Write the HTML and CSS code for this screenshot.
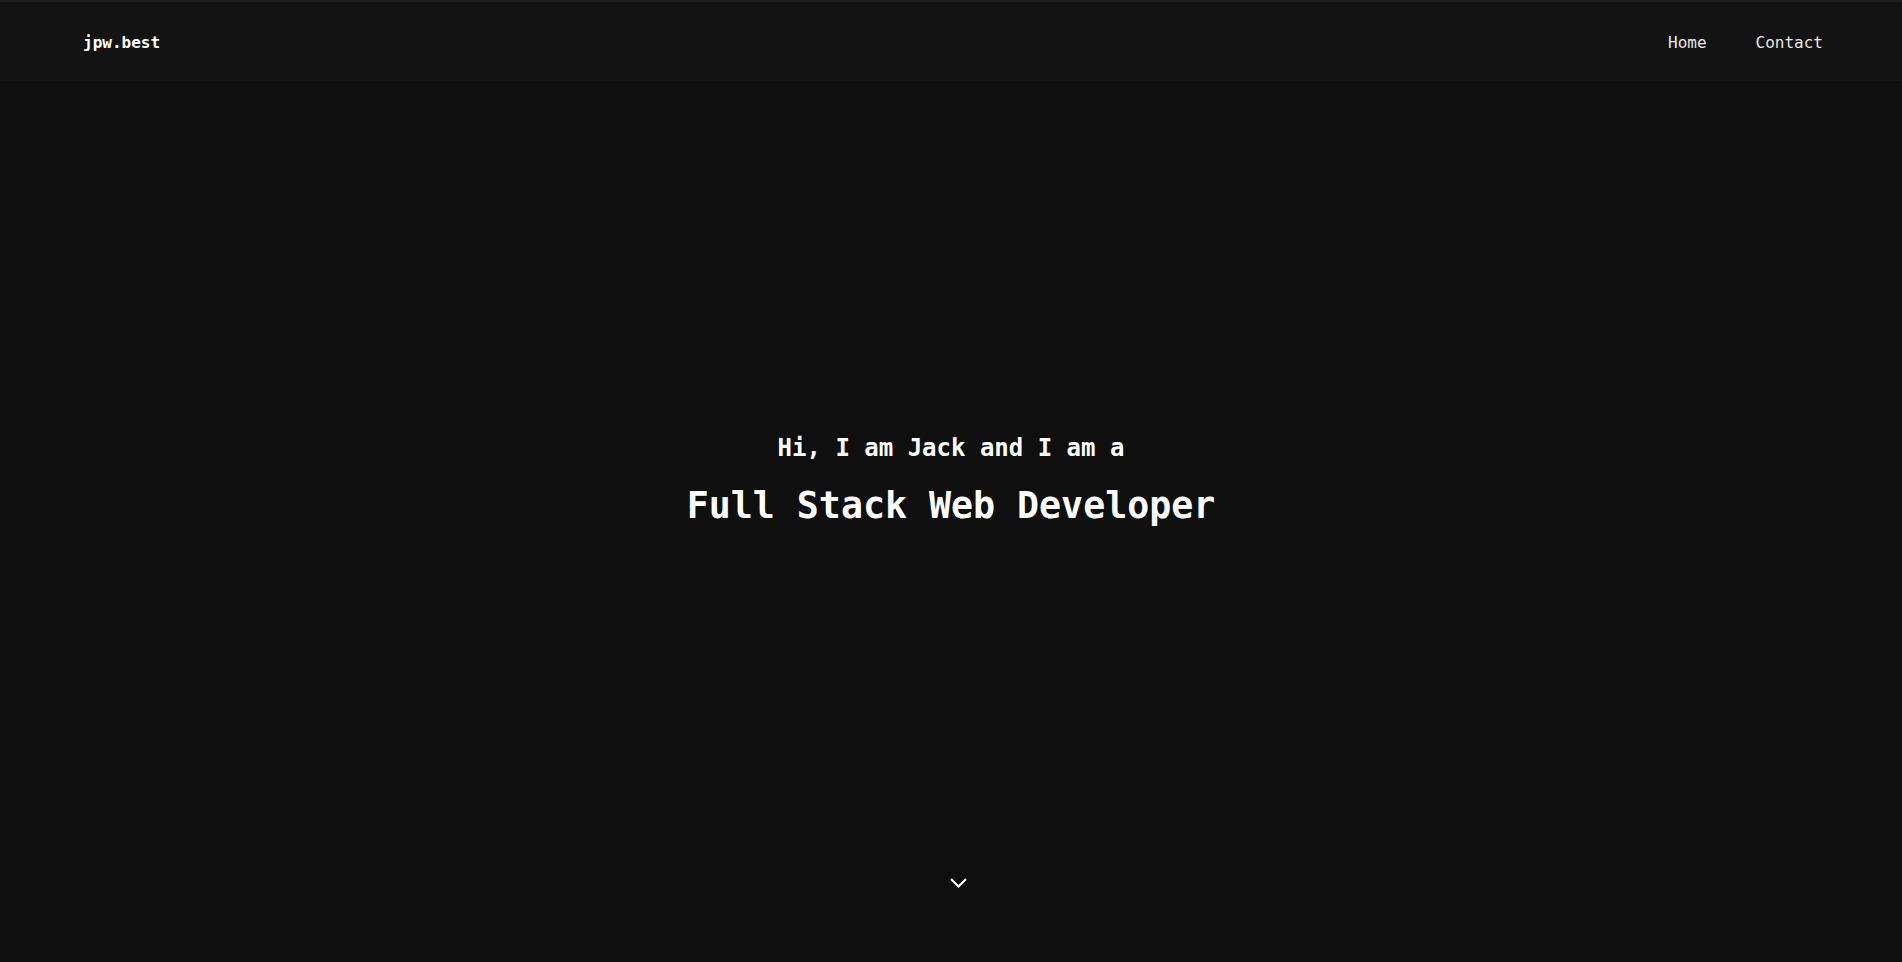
FILE: index.html
```html
<!DOCTYPE html>
<html lang="en">
<head>
<meta charset="utf-8">
<title>jpw.best</title>
<link rel="stylesheet" href="styles.css">
</head>
<body>
<header class="site-header">
  <a class="logo" href="#">jpw.best</a>
  <nav class="nav">
    <a href="#">Home</a>
    <a href="#">Contact</a>
  </nav>
</header>
<main class="hero">
  <div class="spacer"></div>
  <div class="intro">
    <p class="greeting">Hi, I am Jack and I am a</p>
    <h1 class="title">Full Stack Web Developer</h1>
  </div>
  <div class="scroll">
    <svg class="chevron" width="17" height="10" viewBox="0 0 17 10" aria-hidden="true">
      <polyline points="1,1 8.5,8.5 16,1" fill="none" stroke="#ffffff" stroke-width="2"/>
    </svg>
  </div>
</main>
</body>
</html>
```

FILE: styles.css
```css
* { box-sizing: border-box; }

html, body {
  margin: 0;
  padding: 0;
  background: #0f0f0f;
  color: #ffffff;
  font-family: "DejaVu Sans Mono", "Liberation Mono", monospace;
}

a { color: inherit; text-decoration: none; }

.site-header {
  position: fixed;
  top: 0;
  left: 0;
  right: 0;
  height: 81px;
  background: #131313;
  border-top: 2px solid #1e1e1e;
  padding: 2px 79px 0 83px;
  display: flex;
  align-items: center;
  justify-content: space-between;
  z-index: 10;
}

.logo {
  font-size: 16px;
  font-weight: bold;
  color: #ffffff;
}

.nav {
  display: flex;
  gap: 49px;
}

.nav a {
  font-size: 16px;
  color: #e8e8e8;
}

.hero {
  min-height: 100vh;
  display: grid;
  grid-template-rows: 1fr auto 1fr;
}

.intro {
  display: flex;
  flex-direction: column;
  align-items: center;
  text-align: center;
}

.greeting {
  margin: 0;
  font-size: 24px;
  line-height: 30px;
  font-weight: bold;
}

.title {
  margin: 20px 0 0;
  font-size: 36.6px;
  line-height: 46px;
  font-weight: bold;
}

.scroll {
  display: flex;
  justify-content: center;
  align-items: flex-end;
  padding-bottom: 74px;
  padding-left: 15px;
}

.chevron { display: block; }
```
